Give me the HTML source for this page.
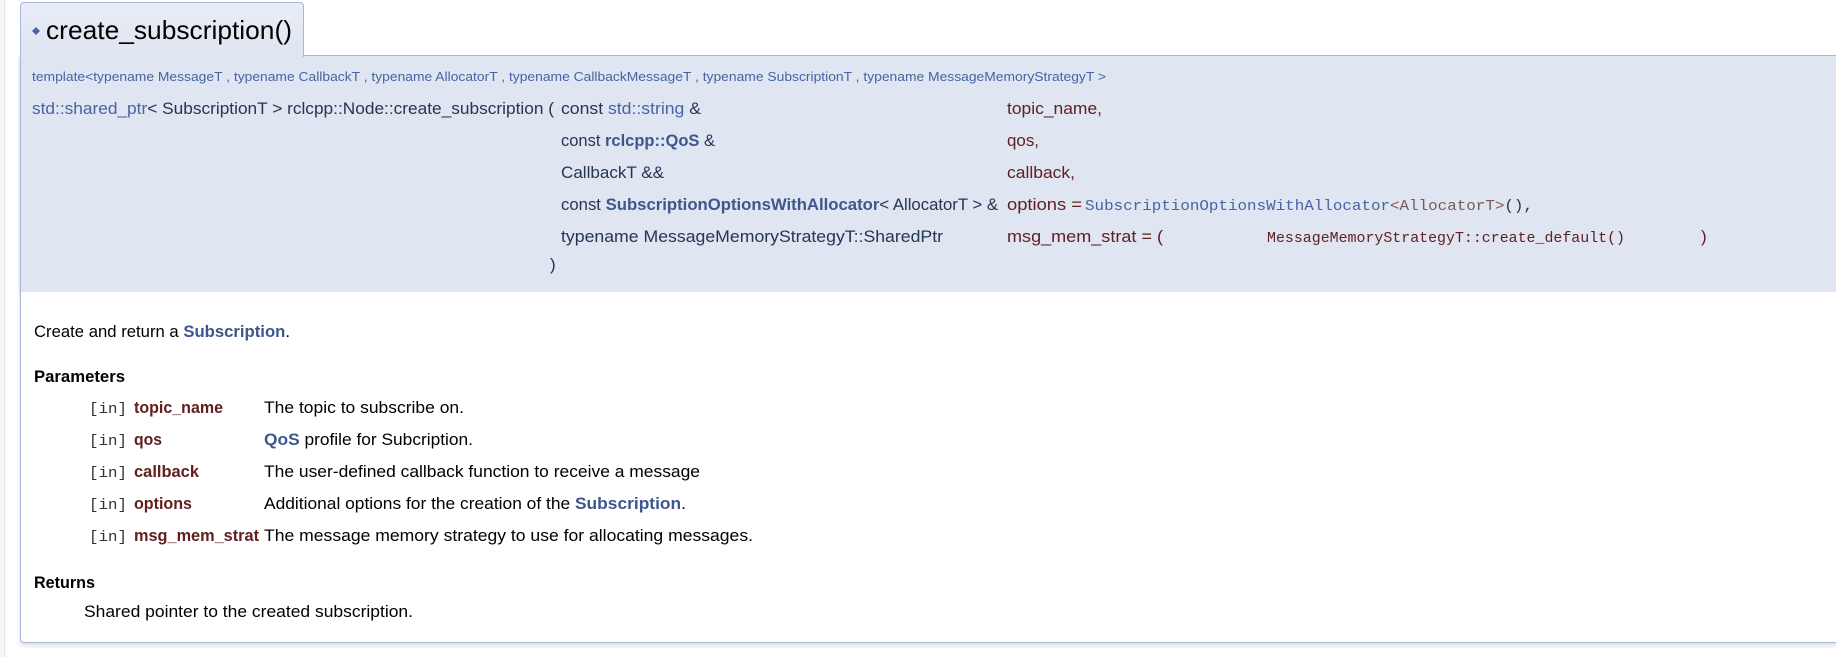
<!DOCTYPE html>
<html><head><meta charset="utf-8"><style>
html,body{margin:0;padding:0;background:#fff;width:1836px;height:657px;overflow:hidden;position:relative}
.strip{position:absolute;left:0;top:0;width:4px;height:657px;background:#f7f7f7;border-right:1px solid #e4e4e4}
.tab{position:absolute;left:20px;top:2px;width:282px;height:54px;background:linear-gradient(#e8edf6,#dfe5f1);border:1px solid #a8b8d9;border-bottom:none;border-radius:4px 4px 0 0}
.proto{position:absolute;left:20px;top:55px;width:1830px;height:236px;background:#dfe5f1;border-top:1px solid #a8b8d9;border-left:1px solid #a8b8d9;box-shadow:0 2px 3px rgba(0,0,0,.25)}
.doc{position:absolute;left:20px;top:292px;width:1830px;height:350px;background:#fff;border-left:1px solid #a8b8d9;border-bottom:1px solid #a8b8d9;border-radius:0 0 0 4px;box-shadow:0 3px 4px rgba(0,0,0,.12)}
svg{position:absolute;left:0;top:0}
text{font-family:"Liberation Sans",sans-serif}
.m{font-family:"Liberation Mono",monospace}
</style></head><body>
<div class="strip"></div>
<div class="proto"></div>
<div class="tab"></div>
<div class="doc"></div>
<svg width="1836" height="657" viewBox="0 0 1836 657">
<path d="M36 27 L40 31 L36 35 L32 31Z" fill="#4665a2"/>
<text x="46" y="39" font-size="26" fill="#000" textLength="246" lengthAdjust="spacingAndGlyphs">create_subscription()</text>
<text x="32" y="81" font-size="13" fill="#4665a2" textLength="1074" lengthAdjust="spacingAndGlyphs">template&lt;typename MessageT , typename CallbackT , typename AllocatorT , typename CallbackMessageT , typename SubscriptionT , typename MessageMemoryStrategyT &gt;</text>
<g font-size="17">
<text x="32" y="114" fill="#253555" textLength="522" lengthAdjust="spacingAndGlyphs"><tspan fill="#4665a2">std::shared_ptr</tspan>&lt; SubscriptionT &gt; rclcpp::Node::create_subscription (</text>
<text x="561" y="114" fill="#253555" textLength="140" lengthAdjust="spacingAndGlyphs">const <tspan fill="#4665a2">std::string</tspan> &amp;</text>
<text x="561" y="146" fill="#253555" textLength="154" lengthAdjust="spacingAndGlyphs">const <tspan fill="#3d578c" font-weight="bold">rclcpp::QoS</tspan> &amp;</text>
<text x="561" y="178" fill="#253555" textLength="103" lengthAdjust="spacingAndGlyphs">CallbackT &amp;&amp;</text>
<text x="561" y="210" fill="#253555" textLength="437" lengthAdjust="spacingAndGlyphs">const <tspan fill="#3d578c" font-weight="bold">SubscriptionOptionsWithAllocator</tspan>&lt; AllocatorT &gt; &amp;</text>
<text x="561" y="242" fill="#253555" textLength="382" lengthAdjust="spacingAndGlyphs">typename MessageMemoryStrategyT::SharedPtr</text>
<text x="550" y="270" fill="#253555">)</text>
<text x="1007" y="114" fill="#602020" textLength="95" lengthAdjust="spacingAndGlyphs">topic_name,</text>
<text x="1007" y="146" fill="#602020" textLength="32" lengthAdjust="spacingAndGlyphs">qos,</text>
<text x="1007" y="178" fill="#602020" textLength="68" lengthAdjust="spacingAndGlyphs">callback,</text>
<text x="1007" y="210" fill="#602020" textLength="75" lengthAdjust="spacingAndGlyphs">options =</text>
<text x="1085" y="210" class="m" font-size="15" fill="#4665a2" textLength="448" lengthAdjust="spacingAndGlyphs">SubscriptionOptionsWithAllocator<tspan fill="#7a5a5a">&lt;AllocatorT&gt;</tspan><tspan fill="#253555">(),</tspan></text>
<text x="1007" y="242" fill="#602020" textLength="156" lengthAdjust="spacingAndGlyphs">msg_mem_strat = (</text>
<text x="1267" y="242" class="m" font-size="15" fill="#602020" textLength="358" lengthAdjust="spacingAndGlyphs">MessageMemoryStrategyT::create_default()</text>
<text x="1701" y="242" fill="#602020">)</text>
</g>
<g font-size="17" fill="#000">
<text x="34" y="337" textLength="256" lengthAdjust="spacingAndGlyphs">Create and return a <tspan fill="#3d578c" font-weight="bold">Subscription</tspan>.</text>
<text x="34" y="382" font-weight="bold" textLength="91" lengthAdjust="spacingAndGlyphs">Parameters</text>
<g class="m">
<text x="89" y="413" class="m" font-size="15" fill="#333" textLength="38" lengthAdjust="spacingAndGlyphs">[in]</text>
<text x="89" y="445" class="m" font-size="15" fill="#333" textLength="38" lengthAdjust="spacingAndGlyphs">[in]</text>
<text x="89" y="477" class="m" font-size="15" fill="#333" textLength="38" lengthAdjust="spacingAndGlyphs">[in]</text>
<text x="89" y="509" class="m" font-size="15" fill="#333" textLength="38" lengthAdjust="spacingAndGlyphs">[in]</text>
<text x="89" y="541" class="m" font-size="15" fill="#333" textLength="38" lengthAdjust="spacingAndGlyphs">[in]</text>
</g>
<g fill="#602020" font-weight="bold">
<text x="134" y="413" textLength="89" lengthAdjust="spacingAndGlyphs">topic_name</text>
<text x="134" y="445" textLength="28" lengthAdjust="spacingAndGlyphs">qos</text>
<text x="134" y="477" textLength="65" lengthAdjust="spacingAndGlyphs">callback</text>
<text x="134" y="509" textLength="58" lengthAdjust="spacingAndGlyphs">options</text>
<text x="134" y="541" textLength="125" lengthAdjust="spacingAndGlyphs">msg_mem_strat</text>
</g>
<text x="264" y="413" textLength="200" lengthAdjust="spacingAndGlyphs">The topic to subscribe on.</text>
<text x="264" y="445" textLength="209" lengthAdjust="spacingAndGlyphs"><tspan fill="#3d578c" font-weight="bold">QoS</tspan> profile for Subcription.</text>
<text x="264" y="477" textLength="436" lengthAdjust="spacingAndGlyphs">The user-defined callback function to receive a message</text>
<text x="264" y="509" textLength="422" lengthAdjust="spacingAndGlyphs">Additional options for the creation of the <tspan fill="#3d578c" font-weight="bold">Subscription</tspan>.</text>
<text x="264" y="541" textLength="489" lengthAdjust="spacingAndGlyphs">The message memory strategy to use for allocating messages.</text>
<text x="34" y="588" font-weight="bold" textLength="61" lengthAdjust="spacingAndGlyphs">Returns</text>
<text x="84" y="617" textLength="329" lengthAdjust="spacingAndGlyphs">Shared pointer to the created subscription.</text>
</g>
</svg>
</body></html>
